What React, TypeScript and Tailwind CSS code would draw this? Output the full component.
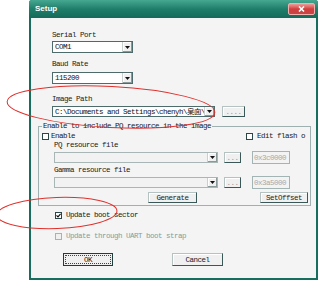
import clsx from "clsx";

const mono = "font-['Liberation_Mono','Noto_Sans_CJK_SC',monospace] text-[7.5px] leading-[8px] tracking-[-0.5px]";

function Arrow() {
  return (
    <div className="flex h-full w-[10px] items-center justify-center border-l border-[#c8d0d0] bg-[#f0f0f0] shadow-[inset_-1px_-1px_0_#8a9a9a,inset_1px_1px_0_#ffffff]">
      <svg width="5" height="3" viewBox="0 0 5 3">
        <path d="M0 0 L5 0 L2.5 3 Z" fill="#111" />
      </svg>
    </div>
  );
}

function Combo({ className, value, disabled }: { className: string; value?: string; disabled?: boolean }) {
  return (
    <div
      className={clsx(
        "flex shrink-0 border",
        disabled ? "border-[#a9b6b6] bg-[#f2f2f2]" : "border-[#4d6b6b] bg-white",
        className
      )}
    >
      <div className={clsx(mono, "min-w-0 flex-1 self-center overflow-hidden whitespace-nowrap pl-[2px] text-[#111]")}>
        {value}
      </div>
      <Arrow />
    </div>
  );
}

function Btn({ className, label, focus, dim }: { className: string; label: string; focus?: boolean; dim?: boolean }) {
  return (
    <div
      className={clsx(
        "flex shrink-0 items-center justify-center border bg-[#f0f0f0]",
        focus
          ? "border-[#1f3d3d] p-[1px]"
          : "border-[#b4c2c2] border-r-[#3a5858] border-b-[#3a5858] shadow-[inset_1px_1px_0_#ffffff]",
        className
      )}
    >
      <div
        className={clsx(
          mono,
          "flex h-full w-full items-center justify-center",
          focus && "border border-dotted border-[#444]",
          dim ? "text-[#8a9a9a]" : "text-[#222]"
        )}
      >
        {label}
      </div>
    </div>
  );
}

function Check({ checked, disabled }: { checked?: boolean; disabled?: boolean }) {
  return (
    <div
      className={clsx(
        "flex h-[7px] w-[7px] shrink-0 items-center justify-center border",
        disabled ? "border-[#a4b4b4] bg-[#f0f0f0]" : "border-[#2a4646] bg-white"
      )}
    >
      {checked && (
        <svg width="5" height="5" viewBox="0 0 5 5">
          <path d="M0.5 2.3 L2 3.8 L4.6 0.8" stroke="#111" strokeWidth="1.2" fill="none" />
        </svg>
      )}
    </div>
  );
}

function TextBox({ value }: { value: string }) {
  return (
    <div className={clsx(mono, "flex h-[13px] w-[38px] shrink-0 items-center border border-[#a3b4b4] bg-[#f3f3f3] pl-[1px] text-[#a8a8a8]")}>
      {value}
    </div>
  );
}

function Label({ children, className }: { children: React.ReactNode; className?: string }) {
  return <div className={clsx(mono, "whitespace-nowrap text-[#1a1a1a]", className)}>{children}</div>;
}

export default function App() {
  return (
    <div className="relative h-[282px] w-[320px] overflow-hidden bg-white">
      <div className="ml-[29px] flex h-[280px] w-[289px] flex-col overflow-hidden rounded-t-[3px] bg-[#176e5c]">
        {/* title bar */}
        <div className="flex h-[18px] shrink-0 items-center bg-gradient-to-b from-[#45a891] via-[#1f7e6a] to-[#156a58] pl-[6px] pr-[3px]">
          <span className="font-['Liberation_Sans',sans-serif] text-[8px] font-bold text-white">Setup</span>
          <div className="ml-auto flex h-[12px] w-[27px] items-center justify-center rounded-[2px] border border-[#f0b0b0] bg-gradient-to-b from-[#ec9a9a] via-[#d23c3c] to-[#c64646]">
            <svg width="7" height="6" viewBox="0 0 7 6">
              <path d="M1 0.5 L6 5.5 M6 0.5 L1 5.5" stroke="#fff" strokeWidth="1.6" />
            </svg>
          </div>
        </div>

        {/* client area */}
        <div className="mx-[2px] mb-[2px] flex flex-1 flex-col bg-[#f4f4f4] pl-[7px]">
          <div className="ml-[14px] flex flex-col">
            <Label className="mt-[13px]">Serial Port</Label>
            <Combo className="mt-[2px] h-[12px] w-[81px]" value="COM1" />
            <Label className="mt-[7px]">Baud Rate</Label>
            <Combo className="mt-[4px] h-[12px] w-[81px]" value="115200" />
            <Label className="mt-[11px]">Image Path</Label>
            <div className="mt-[3px] flex items-center">
              <Combo className="h-[11px] w-[163px]" value={"C:\\Documents and Settings\\chenyh\\桌面\\"} />
              <Btn className="ml-[7px] h-[11px] w-[23px]" label="...." dim />
            </div>
          </div>

          {/* group box */}
          <fieldset className="mt-[5px] w-[273px] border border-[#9fb0b0] pb-[2px]">
            <legend className={clsx(mono, "ml-[3px] px-[1px] text-[#1a1a1a]")}>
              Enable to include PQ resource in the image
            </legend>
            <div className="mt-[2px] flex h-[8px] items-center pl-[3px]">
              <Check />
              <Label className="ml-[2px]">Enable</Label>
              <div className="ml-auto mr-[4px] flex w-[60px] items-center">
                <Check />
                <Label className="ml-[4px]">Edit flash o</Label>
              </div>
            </div>
            <div className="flex flex-col pl-[15px]">
              <Label className="mt-[1px]">PQ resource file</Label>
              <div className="mt-[2px] flex h-[13px] items-center">
                <Combo className="h-[11px] w-[164px]" disabled />
                <Btn className="ml-[6px] h-[11px] w-[17px]" label="..." dim />
                <div className="ml-[11px]">
                  <TextBox value="0x3c0000" />
                </div>
              </div>
              <Label className="mt-[2px]">Gamma resource file</Label>
              <div className="mt-[2px] flex h-[13px] items-center">
                <Combo className="h-[11px] w-[164px]" disabled />
                <Btn className="ml-[6px] h-[11px] w-[17px]" label="..." dim />
                <div className="ml-[11px]">
                  <TextBox value="0x3a5000" />
                </div>
              </div>
            </div>
            <div className="mt-[3px] flex">
              <Btn className="ml-[109px] h-[11px] w-[49px]" label="Generate" />
              <Btn className="ml-[63px] h-[11px] w-[48px]" label="SetOffset" />
            </div>
          </fieldset>

          <div className="ml-[14px] flex flex-col">
            <div className="mt-[5px] flex h-[8px] items-center pl-[3px]">
              <Check checked />
              <Label className="ml-[4px]">Update boot sector</Label>
            </div>
            <div className="mt-[13px] flex h-[8px] items-center pl-[3px]">
              <Check disabled />
              <div className={clsx(mono, "ml-[4px] text-[#7e9e9e]")}>Update through UART boot strap</div>
            </div>
            <div className="mt-[13px] flex">
              <Btn className="ml-[11px] h-[13px] w-[50px]" label="OK" focus />
              <Btn className="ml-[59px] h-[13px] w-[51px]" label="Cancel" />
            </div>
          </div>
        </div>
      </div>

      {/* red annotation marks */}
      <svg className="pointer-events-none absolute inset-0" width="320" height="282" viewBox="0 0 320 282">
        <ellipse cx="111" cy="107" rx="104" ry="20.5" transform="rotate(3 111 107)" fill="none" stroke="#e0302c" strokeWidth="1" />
        <ellipse cx="57" cy="213" rx="60" ry="15.5" transform="rotate(-2 57 213)" fill="none" stroke="#e0302c" strokeWidth="1" />
      </svg>
    </div>
  );
}
